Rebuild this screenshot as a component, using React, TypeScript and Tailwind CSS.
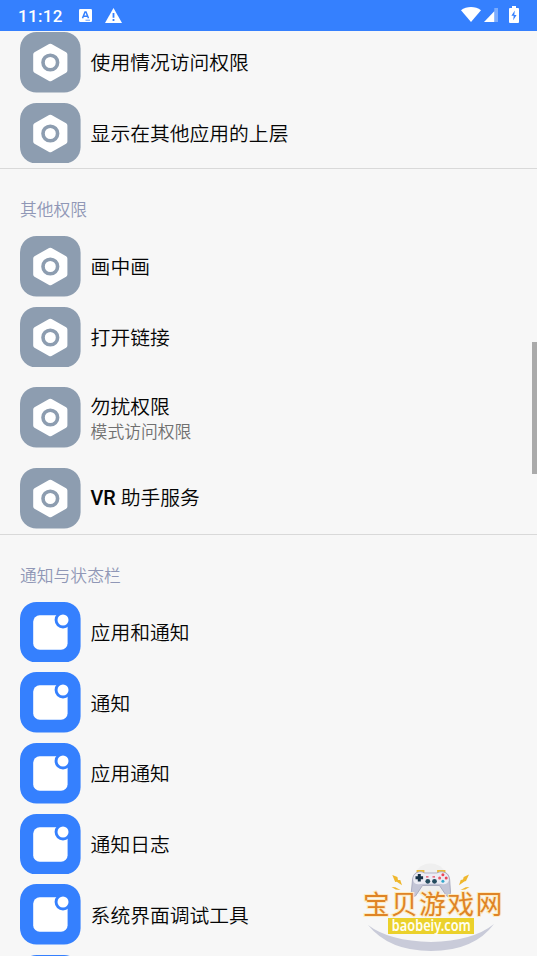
import React from 'react';

type IconKind = 'gear' | 'notice';

interface Item {
  title: string;
  latin?: string;
  subtitle?: string;
}

interface Section {
  label?: string;
  icon: IconKind;
  items: Item[];
}

const sections: Section[] = [
  {
    icon: 'gear',
    items: [{ title: '使用情况访问权限' }, { title: '显示在其他应用的上层' }],
  },
  {
    label: '其他权限',
    icon: 'gear',
    items: [
      { title: '画中画' },
      { title: '打开链接' },
      { title: '勿扰权限', subtitle: '模式访问权限' },
      { latin: 'VR', title: '助手服务' },
    ],
  },
  {
    label: '通知与状态栏',
    icon: 'notice',
    items: [
      { title: '应用和通知' },
      { title: '通知' },
      { title: '应用通知' },
      { title: '通知日志' },
      { title: '系统界面调试工具' },
      { title: '' },
    ],
  },
];

const GearIcon = () => (
  <svg viewBox="0 0 60.6 60.6" className="w-[60.6px] h-[60.6px] shrink-0">
    <rect width="60.6" height="60.6" rx="16.5" fill="#8d9db0" />
    <path
      d="M30.3 14.2 L44.9 22.4 V38.6 L30.3 46.8 L15.7 38.6 V22.4 Z"
      fill="#fff"
      stroke="#fff"
      strokeWidth="5"
      strokeLinejoin="round"
    />
    <circle cx="30.3" cy="30.5" r="7.3" fill="none" stroke="#8d9db0" strokeWidth="3.6" />
  </svg>
);

const NoticeIcon = () => (
  <svg viewBox="0 0 60.6 60.6" className="w-[60.6px] h-[60.6px] shrink-0">
    <rect width="60.6" height="60.6" rx="16.5" fill="#3580fe" />
    <rect x="13.2" y="13.3" width="34.4" height="34.4" rx="6.5" fill="#fff" />
    <circle cx="43" cy="18" r="8.4" fill="#3580fe" />
    <circle cx="43" cy="18" r="5.5" fill="#fff" />
  </svg>
);

const Row: React.FC<{ item: Item; icon: IconKind }> = ({ item, icon }) => (
  <div className={`flex items-center pl-5 shrink-0 ${item.subtitle ? 'h-[90.8px]' : 'h-[70.7px]'}`}>
    {icon === 'gear' ? <GearIcon /> : <NoticeIcon />}
    <div className={`ml-[10px] whitespace-nowrap ${item.subtitle ? 'pt-[1.5px]' : ''}`}>
      <div className="text-[19.8px] leading-[26px] font-[350] text-[#050505]">
        {item.latin && <span className="font-['Roboto'] font-medium">{item.latin} </span>}
        {item.title}
      </div>
      {item.subtitle && (
        <div className="text-[16.8px] leading-[24px] font-[350] text-[#707070]">{item.subtitle}</div>
      )}
    </div>
  </div>
);

const StatusBar = () => (
  <header className="relative z-10 h-[31px] shrink-0 bg-[#3580fe] flex items-center text-white">
    <span className="ml-[18px] w-[61px] pt-[1px] font-['Roboto'] font-medium text-[17px] leading-none tracking-[0.35px]">
      11:12
    </span>
    <svg viewBox="0 0 13 13" className="w-[13px] h-[13px]">
      <rect width="13" height="13" rx="1.2" fill="#fff" />
      <path d="M3.5 9.3 L6 2.9 H7 L9.5 9.3 M4.6 7.2 H8.4" fill="none" stroke="#3580fe" strokeWidth="1.5" />
      <path d="M6.5 11.2 H11" stroke="#3580fe" strokeWidth="0.8" />
    </svg>
    <svg viewBox="0 0 17 15" className="ml-[13px] w-[17px] h-[15px]">
      <path d="M8.5 0 L17 15 H0 Z" fill="#fff" />
      <path d="M8.5 5 V9.8 M8.5 11 V13" stroke="#3580fe" strokeWidth="1.8" />
    </svg>
    <div className="ml-auto mr-[18px] -mt-[2px] flex items-center">
      <svg viewBox="0 0 20 15" className="w-[20px] h-[15px]">
        <path d="M0 3.3 C5.5 -1.1 14.5 -1.1 20 3.3 L10 15 Z" fill="#fff" />
      </svg>
      <svg viewBox="0 0 14 14" className="ml-[3px] w-[14px] h-[14px]">
        <path d="M10.3 14 V0 H14 V14 Z" fill="#fff" opacity="0.35" />
        <path d="M0 14 L10.3 3.2 V14 Z" fill="#fff" />
      </svg>
      <svg viewBox="0 0 10 17" className="ml-[11px] w-[10px] h-[17px]">
        <path d="M3 0 H7 V2 H9 Q10 2 10 3 V16 Q10 17 9 17 H1 Q0 17 0 16 V3 Q0 2 1 2 H3 Z" fill="#fff" />
        <path d="M5.8 4.5 L2.4 9.8 H4.7 L4.2 14.3 L7.6 8.9 H5.3 Z" fill="#3580fe" />
      </svg>
    </div>
  </header>
);

const SiteBadge = () => (
  <svg viewBox="350 855 187 101" className="absolute left-[350px] top-[855px] z-20 w-[187px] h-[101px]">
    <circle cx="430.5" cy="881" r="17.5" fill="#efefef" />
    <path d="M368 925 Q389 941 431 942 Q473 941 494 924 Q474 951 431 951 Q389 951 368 925 Z" fill="#c9cbd9" />
    {/* gamepad */}
    <path d="M417.5 873.5 V870.8 H423.5 V873 M438 873 V870.8 H444.5 V873.5" fill="none" stroke="#e8b93c" strokeWidth="1.8" />
    <path
      d="M417 872.5 Q421 871 424.5 873 H437 Q441 871 445 872.5 Q449.3 874 449.7 880 L450.5 892 Q450 898 446.5 896 L439.5 885.5 H422.5 L415.5 896 Q411.5 897.5 411.3 892 L412.5 880 Q413 874 417 872.5 Z"
      fill="#c3c5d6"
      stroke="#9fa2b8"
      strokeWidth="0.8"
    />
    <path
      d="M417 872.9 Q421 871.6 424.5 873.4 H437 Q441 871.6 445 872.9 Q449 875 448.8 880.5 Q447.5 884.5 443 884.2 L439 883.8 H423 L419 884.2 Q413.8 884.5 413.2 880 Q413 875 417 872.9 Z"
      fill="#ececf4"
    />
    <path d="M419.3 874 V881.6 M415.5 877.8 H423.1" stroke="#173247" strokeWidth="3" />
    <circle cx="442.9" cy="874.7" r="1.5" fill="#ed4758" />
    <circle cx="439.6" cy="878" r="1.5" fill="#ed5a69" />
    <circle cx="446.2" cy="878" r="1.5" fill="#ed4758" />
    <circle cx="442.9" cy="881.2" r="1.5" fill="#35a8cc" />
    <path d="M426 876.8 H428.5 M432.5 876.8 H435" stroke="#e84b63" strokeWidth="1.3" />
    <circle cx="427.8" cy="881.3" r="2.4" fill="#244b5e" />
    <circle cx="434.5" cy="881.3" r="2.4" fill="#244b5e" />
    {/* sparks */}
    <path d="M392.3 875 L397.4 877.1 L398 880 L400.3 880 L402 885.3 L396.8 881.7 L395.2 882 Z" fill="#efb72d" />
    <path d="M469 874.5 L463.7 877 L463 879.5 L460.7 880 L459 885.3 L464.3 881.5 L466 881 Z" fill="#efb72d" />
    <path d="M391.5 887 L395.3 887.3 L400.5 890 L395.7 889.4 Z M469.5 887 L465.7 887.3 L460.5 890 L465.3 889.4 Z" fill="#efb72d" />
    <text
      x="362.9"
      y="914"
      fontSize="26.6"
      letterSpacing="1.6"
      fontFamily="'Noto Sans CJK SC', sans-serif"
      fill="#df8426"
      stroke="#fdebc1"
      strokeWidth="2"
      paintOrder="stroke"
    >
      宝贝游戏网
    </text>
    <rect x="388" y="918" width="86" height="16" fill="#ebd12b" />
    <text
      x="391.8"
      y="931"
      fontSize="15.2"
      fontWeight="600"
      fontFamily="'Noto Sans', sans-serif"
      fill="#fffef0"
      textLength="79"
      lengthAdjust="spacingAndGlyphs"
    >
      baobeiy.com
    </text>
  </svg>
);

export default function App() {
  return (
    <div className="relative w-[537px] h-[956px] overflow-hidden bg-[#f7f7f7] flex flex-col font-['Noto_Sans_CJK_SC',sans-serif]">
      <StatusBar />
      <main className="-mt-[4.1px] flex flex-col">
        {sections.map((section, index) => (
          <section
            key={index}
            className={`flex flex-col ${index > 0 ? 'border-t border-[#d9d9d9]' : ''}`}
          >
            {section.label && (
              <h2 className="h-[61.7px] pl-5 pt-[28px] text-[16.8px] leading-[25px] font-[350] text-[#9097b6]">
                {section.label}
              </h2>
            )}
            {section.items.map((item, i) => (
              <Row key={i} item={item} icon={section.icon} />
            ))}
          </section>
        ))}
      </main>
      <div className="absolute right-0 top-[342px] w-[5px] h-[132px] bg-[#aaaaaa]" />
      <SiteBadge />
    </div>
  );
}
